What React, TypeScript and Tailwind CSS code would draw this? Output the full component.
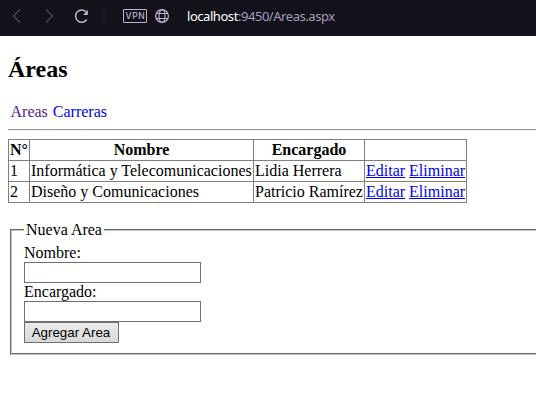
const areas = [
  { id: 1, nombre: 'Informática y Telecomunicaciones', encargado: 'Lidia Herrera' },
  { id: 2, nombre: 'Diseño y Comunicaciones', encargado: 'Patricio Ramírez' },
];

function BrowserBar() {
  return (
    <header className="flex h-9 items-center border-b border-[#1a1420] bg-[#13111a] pb-[3px] font-['Open_Sans',sans-serif]">
      <svg className="ml-3 h-4 w-[9px]" viewBox="0 0 9 16" fill="none" stroke="#4d4957" strokeWidth="1.3">
        <path d="M8 1.5 1.5 8 8 14.5" />
      </svg>
      <svg className="ml-6 h-4 w-[9px]" viewBox="0 0 9 16" fill="none" stroke="#4d4957" strokeWidth="1.3">
        <path d="M1 1.5 7.5 8 1 14.5" />
      </svg>
      <svg className="ml-5 h-4 w-4" viewBox="0 0 16 16" fill="none" stroke="#bdb5d0" strokeWidth="1.5">
        <path d="M12.8 11.5A6.1 6.1 0 1 1 12.4 4.2" />
        <path d="M13.8 1.7v5.2H9.2z" fill="#bdb5d0" stroke="none" />
      </svg>
      <div className="ml-[13px] flex flex-col gap-[2px]">
        <i className="h-[2px] w-[2px] bg-[#292631]" />
        <i className="h-[2px] w-[2px] bg-[#292631]" />
        <i className="h-[2px] w-[2px] bg-[#292631]" />
      </div>
      <span className="ml-[18px] flex h-[14px] w-6 items-center justify-center rounded-[1px] border border-[#bdb5d0] pl-px font-['Inter',sans-serif] text-[8.5px] leading-none font-medium tracking-[0.7px] text-[#bdb5d0]">
        VPN
      </span>
      <svg className="ml-2 h-4 w-[14px]" viewBox="0 0 14 16" fill="none" stroke="#bdb5d0" strokeWidth="1.15">
        <circle cx="7" cy="8" r="6.4" />
        <ellipse cx="7" cy="8" rx="3" ry="6.4" />
        <path d="M1.2 5.5h11.6M1.2 10.5h11.6" />
      </svg>
      <span className="ml-[18px] pt-0.5 font-['Noto_Sans','Open_Sans',sans-serif] text-[13px] tracking-[-0.45px] text-[#a59dba]">
        <span className="text-white">localhost</span>:9450/Areas.aspx
      </span>
    </header>
  );
}

function AreasTable() {
  return (
    <table className="mt-2 w-[459px] table-fixed border-collapse leading-[18px]">
      <colgroup>
        <col className="w-[21px]" />
        <col className="w-[224px]" />
        <col className="w-[111px]" />
        <col className="w-[102px]" />
      </colgroup>
      <thead>
        <tr>
          {['N°', 'Nombre', 'Encargado', ''].map((title) => (
            <th key={title} className="h-[21px] border border-[#808080] p-px whitespace-nowrap">{title}</th>
          ))}
        </tr>
      </thead>
      <tbody>
        {areas.map((area) => (
          <tr key={area.id}>
            <td className="h-[21px] border border-[#808080] p-px">{area.id}</td>
            <td className="border border-[#808080] p-px whitespace-nowrap">{area.nombre}</td>
            <td className="border border-[#808080] p-px whitespace-nowrap">{area.encargado}</td>
            <td className="border border-[#808080] p-px whitespace-nowrap text-[#0000ee]">
              <a href="#editar" className="underline">Editar</a>{' '}
              <a href="#eliminar" className="underline">Eliminar</a>
            </td>
          </tr>
        ))}
      </tbody>
    </table>
  );
}

function NewAreaForm() {
  return (
    <fieldset className="mt-[18px] ml-0.5 w-[560px] border-2 border-[#c0c0c0] px-3 pt-[5px] pb-[10px] leading-[18px] [border-style:groove]">
      <legend className="px-0.5">Nueva Area</legend>
      <label className="block">
        Nombre:
        <input className="block h-[21px] w-[177px] border border-[#6f6f6f] bg-white px-1" />
      </label>
      <label className="block">
        Encargado:
        <input className="block h-[21px] w-[177px] border border-[#6f6f6f] bg-white px-1" />
      </label>
      <button className="flex h-[21px] w-[95px] items-center justify-center border border-[#707070] bg-linear-to-b from-[#ececec] to-[#d8d8d8] pr-px font-['Liberation_Sans',sans-serif] text-[13.33px] leading-none whitespace-nowrap">
        Agregar Area
      </button>
    </fieldset>
  );
}

export default function App() {
  return (
    <div className="h-[412px] w-[536px] overflow-hidden bg-white font-['Liberation_Serif',serif] text-base text-black">
      <BrowserBar />
      <main className="pt-5 pl-2">
        <h2 className="text-2xl leading-[27px] font-bold">Áreas</h2>
        <nav className="mt-5 flex gap-[5px] pl-[2.5px] leading-[18px]">
          <a href="#areas" className="text-[#551a8b]">Areas</a>
          <a href="#carreras" className="text-[#0000ee]">Carreras</a>
        </nav>
        <hr className="mt-2 h-0.5 border-t border-b border-t-[#9a9a9a] border-b-[#eeeeee]" />
        <AreasTable />
        <NewAreaForm />
      </main>
    </div>
  );
}
